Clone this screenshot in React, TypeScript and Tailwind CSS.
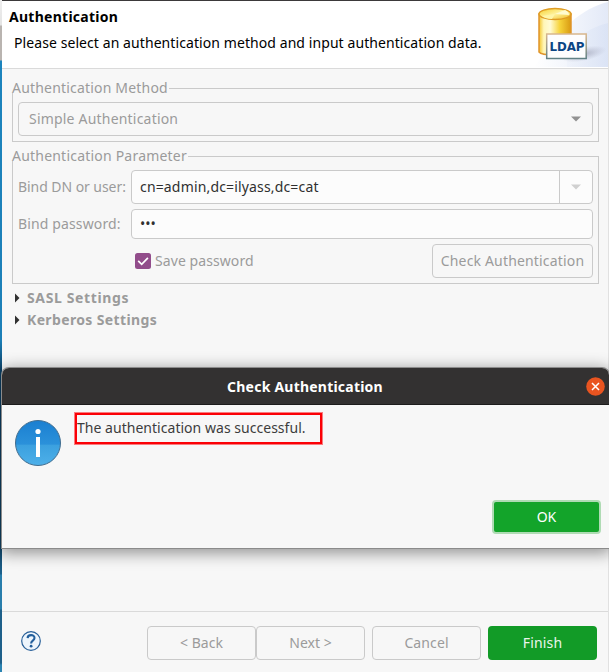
import type { ReactNode } from 'react';

function Group({ title, className, children }: { title: ReactNode; className: string; children: ReactNode }) {
  return (
    <fieldset className={`mr-[9px] ml-[10px] min-w-0 border border-[#cacaca] ${className}`}>
      <legend className="-ml-px flex h-[10px] items-center bg-[#f7f7f7] p-0 pr-px text-[#9b9b9b]">{title}</legend>
      {children}
    </fieldset>
  );
}

function Arrow({ color }: { color: string }) {
  return (
    <svg width="10" height="6" viewBox="0 0 10 6">
      <path d="M0 .5h10L5 5.5z" fill={color} />
    </svg>
  );
}

function Expandable({ children }: { children: ReactNode }) {
  return (
    <div className="flex h-[22px] items-center pl-[13px] font-bold text-[#9b9b9b]">
      <svg width="5" height="10" viewBox="0 0 5 10" className="mr-[7px]">
        <path d="M0 .5v9L4.5 5z" fill="#303030" />
      </svg>
      {children}
    </div>
  );
}

function FooterButton({ children }: { children: ReactNode }) {
  return (
    <button className="h-[34px] w-[109px] rounded-[4px] border border-[#cacaca] pb-px text-[#9b9b9b]">{children}</button>
  );
}

function LdapLogo() {
  return (
    <svg width="89" height="67" viewBox="0 0 89 67" className="shrink-0">
      <defs>
        <linearGradient id="sky" x1="0" x2="1">
          <stop offset="0" stopColor="#fff" />
          <stop offset=".6" stopColor="#eff3fb" />
          <stop offset="1" stopColor="#e3e9f7" />
        </linearGradient>
        <linearGradient id="inner" x1="0" x2="1">
          <stop offset="0" stopColor="#e6ecf8" stopOpacity=".3" />
          <stop offset="1" stopColor="#d9e2f5" stopOpacity=".8" />
        </linearGradient>
        <linearGradient id="gold" x1="0" x2="1">
          <stop offset="0" stopColor="#f3c62d" />
          <stop offset=".15" stopColor="#fff6b8" />
          <stop offset=".35" stopColor="#fffbd5" />
          <stop offset=".65" stopColor="#f6d33a" />
          <stop offset="1" stopColor="#d99a12" />
        </linearGradient>
        <linearGradient id="lid" x1="0" y1="0" x2="1" y2="1">
          <stop offset="0" stopColor="#f5cf2b" />
          <stop offset=".5" stopColor="#fff3a0" />
          <stop offset="1" stopColor="#efb91e" />
        </linearGradient>
        <linearGradient id="frame" x1="0" y1="0" x2="0" y2="1">
          <stop offset="0" stopColor="#d9b78d" />
          <stop offset="1" stopColor="#608084" />
        </linearGradient>
        <radialGradient id="shade">
          <stop offset="0" stopColor="#8c8fa5" stopOpacity=".6" />
          <stop offset="1" stopColor="#a0a4bb" stopOpacity="0" />
        </radialGradient>
      </defs>
      <path d="M89 1C63 7 41 27 15 66H89z" fill="url(#sky)" />
      <path d="M89 22C72 26 59 35 48 48V66H89z" fill="url(#inner)" />
      <ellipse cx="65" cy="53" rx="23" ry="7" fill="url(#shade)" transform="rotate(-12 65 53)" />
      <path d="M20 13v38c3 4 28 4 32 0V13z" fill="url(#gold)" stroke="#df942b" strokeWidth="1.5" />
      <ellipse cx="36" cy="13" rx="16" ry="5.5" fill="url(#lid)" stroke="#df9c25" strokeWidth="1.5" />
      <path d="M36 13l10-4q4 2 4 5z" fill="#fffbd0" />
      <path d="M36 13l-13 2q3 3 10 3z" fill="#fff6a9" />
      <rect x="27.7" y="33" width="39.5" height="24.5" fill="#fdfdfe" stroke="url(#frame)" strokeWidth="1.5" />
      <text x="30.5" y="50" textLength="35" fontFamily="'DejaVu Sans', sans-serif" fontWeight="700" fontSize="11.8" fill="#0c4584">LDAP</text>
    </svg>
  );
}

export default function App() {
  return (
    <div className="relative flex h-[672px] w-[609px] overflow-hidden bg-[#f7f7f7] font-['Noto_Sans','Open_Sans',sans-serif] text-[14px] leading-[20px] text-[#3d3d3d]">
      <div className="w-[2px] shrink-0 bg-[linear-gradient(to_bottom,#eee_0,#e4e4e4_25px,#b9b4b0_26px,#b9b4b0_60px,#1c84bd_61px,#1c7fb7_340px,#0d4167_370px,#124465_545px,#1c628d_574px,#297eac_575px,#297eac_609px,#1e608a_610px,#1e608a_663px,#2b84b2_665px)]" />
      <main className="flex w-[607px] flex-col border-t border-r border-t-[#3b393a] border-r-[#e1e1e1]">
        <header className="flex h-[68px] justify-between border-b border-[#dadada] bg-white text-black">
          <div className="pt-[6px] pl-[7px] whitespace-nowrap">
            <h1 className="font-bold tracking-[0.27px]">Authentication</h1>
            <p className="mt-[6px] pl-[5px] tracking-[0.08px]">Please select an authentication method and input authentication data.</p>
          </div>
          <LdapLogo />
        </header>

        <Group className="mt-[14px] h-[59px]" title={<span className="tracking-[0.19px]">Authentication Method</span>}>
          <div className="mx-[5px] mt-[9px] flex h-[34px] items-center justify-between rounded-[4px] border border-[#cacaca] pr-[11px] pl-[10px] text-[#9b9b9b]">
            <span className="tracking-[0.2px]">Simple Authentication</span>
            <Arrow color="#929292" />
          </div>
        </Group>

        <Group className="mt-[9px] h-[133px]" title={<span className="tracking-[0.21px]">Authentication Parameter</span>}>
          <div className="mx-[5px] mt-[9px] grid grid-cols-[113px_1fr] grid-rows-[34px_30px_34px] gap-y-[5px] text-[#9b9b9b]">
            <label className="self-center tracking-[-0.06px] whitespace-nowrap">Bind DN or user:</label>
            <div className="flex rounded-[4px] border border-[#cacaca] bg-[#fcfcfc]">
              <div className="flex flex-1 items-center pl-[8px] tracking-[0.16px] text-[#303030]">cn=admin,dc=ilyass,dc=cat</div>
              <div className="flex w-[33px] items-center justify-center border-l border-[#cacaca]"><Arrow color="#d0d0d0" /></div>
            </div>
            <label className="self-center tracking-[0.13px] whitespace-nowrap">Bind password:</label>
            <div className="flex items-center rounded-[4px] border border-[#cacaca] bg-[#fcfcfc] pl-[8px] text-[#303030]">•••</div>
            <div className="col-start-2 flex items-center justify-between">
              <div className="flex items-center gap-[4px] pl-[4px]">
                <svg width="16" height="16" viewBox="0 0 16 16">
                  <rect width="16" height="16" rx="2.5" fill="#924d8b" />
                  <path d="M3.2 7.8l3.5 3.5 6.2-6.5" fill="none" stroke="#fff" strokeWidth="1.7" />
                </svg>
                <span className="tracking-[0.08px]">Save password</span>
              </div>
              <button className="h-[34px] w-[161px] rounded-[4px] border border-[#cacaca] tracking-[0.17px] whitespace-nowrap">Check Authentication</button>
            </div>
          </div>
        </Group>

        <section className="mt-[3px] flex-1">
          <Expandable><span className="tracking-[0.62px]">SASL Settings</span></Expandable>
          <Expandable><span className="tracking-[0.36px]">Kerberos Settings</span></Expandable>
        </section>

        <footer className="flex h-[61px] items-start border-t border-[#dadada] pt-[14px] pr-[11px] pl-[19px]">
          <svg width="20" height="20" viewBox="0 0 20 20" className="mt-[5px] mr-auto">
            <circle cx="10" cy="10" r="9.3" fill="#edf5fc" stroke="#275f98" strokeWidth="1.2" />
            <path d="M6.6 7.1C6.7 3.2 13.5 3 13.5 7c0 2.7-3.4 2.6-3.4 5.4" fill="none" stroke="#235f9c" strokeWidth="2.1" />
            <circle cx="10.1" cy="15.2" r="1.4" fill="#235f9c" />
          </svg>
          <div className="flex">
            <FooterButton>&lt; Back</FooterButton>
            <FooterButton>Next &gt;</FooterButton>
          </div>
          <div className="ml-[7px] flex gap-[7px]">
            <FooterButton><span className="tracking-[0.1px]">Cancel</span></FooterButton>
            <button className="h-[34px] w-[109px] rounded-[4px] bg-[#129b27] pb-px tracking-[0.15px] text-[#ebf5ec]">Finish</button>
          </div>
        </footer>
      </main>

      <div role="dialog" className="absolute top-[368px] left-[2px] flex h-[180px] w-[607px] flex-col rounded-t-[7px] bg-[#f7f7f7] shadow-[0_0_0_1px_#8b8b8b,0_3px_16px_2px_rgba(0,0,0,0.42)]">
        <div className="flex h-[37px] items-center rounded-t-[7px] border-b border-[#1d1c1c] bg-[#333131] pr-[4px] pl-[22px] text-white">
          <h2 className="flex-1 pt-px text-center font-bold tracking-[0.22px]">Check Authentication</h2>
          <svg width="19" height="19" viewBox="0 0 19 19">
            <circle cx="9.5" cy="9.5" r="9.3" fill="#e95420" />
            <path d="M6 6l7 7M13 6l-7 7" stroke="#fff" strokeWidth="1.5" />
          </svg>
        </div>
        <div className="flex flex-1 items-start pt-[8px] pl-[12px]">
          <svg width="48" height="48" viewBox="0 0 48 48" className="mt-[6px]">
            <defs>
              <linearGradient id="info" x1="0" y1="0" x2="0" y2="1">
                <stop offset="0" stopColor="#1a7fd1" />
                <stop offset=".53" stopColor="#2b91da" />
                <stop offset=".54" stopColor="#3ba0df" />
                <stop offset="1" stopColor="#4eb0e9" />
              </linearGradient>
            </defs>
            <circle cx="24" cy="24" r="22.5" fill="url(#info)" stroke="#426d8e" />
            <circle cx="24" cy="12.5" r="2.6" fill="#fff" />
            <path d="M22 18h4v20h-4z" fill="#fff" />
          </svg>
          <div className="ml-[13px] flex h-[31px] w-[247px] items-center border-2 border-[#fb0006] pb-[2px] tracking-[0.03px] whitespace-nowrap shadow-[0_0_0_1px_#fb000680]">The authentication was successful.</div>
        </div>
        <div className="flex justify-end pr-[8px] pb-[14px]">
          <button className="h-[34px] w-[109px] rounded-[4px] border-2 border-[#afdbb4] bg-[#13a42a] text-white">OK</button>
        </div>
      </div>
    </div>
  );
}
